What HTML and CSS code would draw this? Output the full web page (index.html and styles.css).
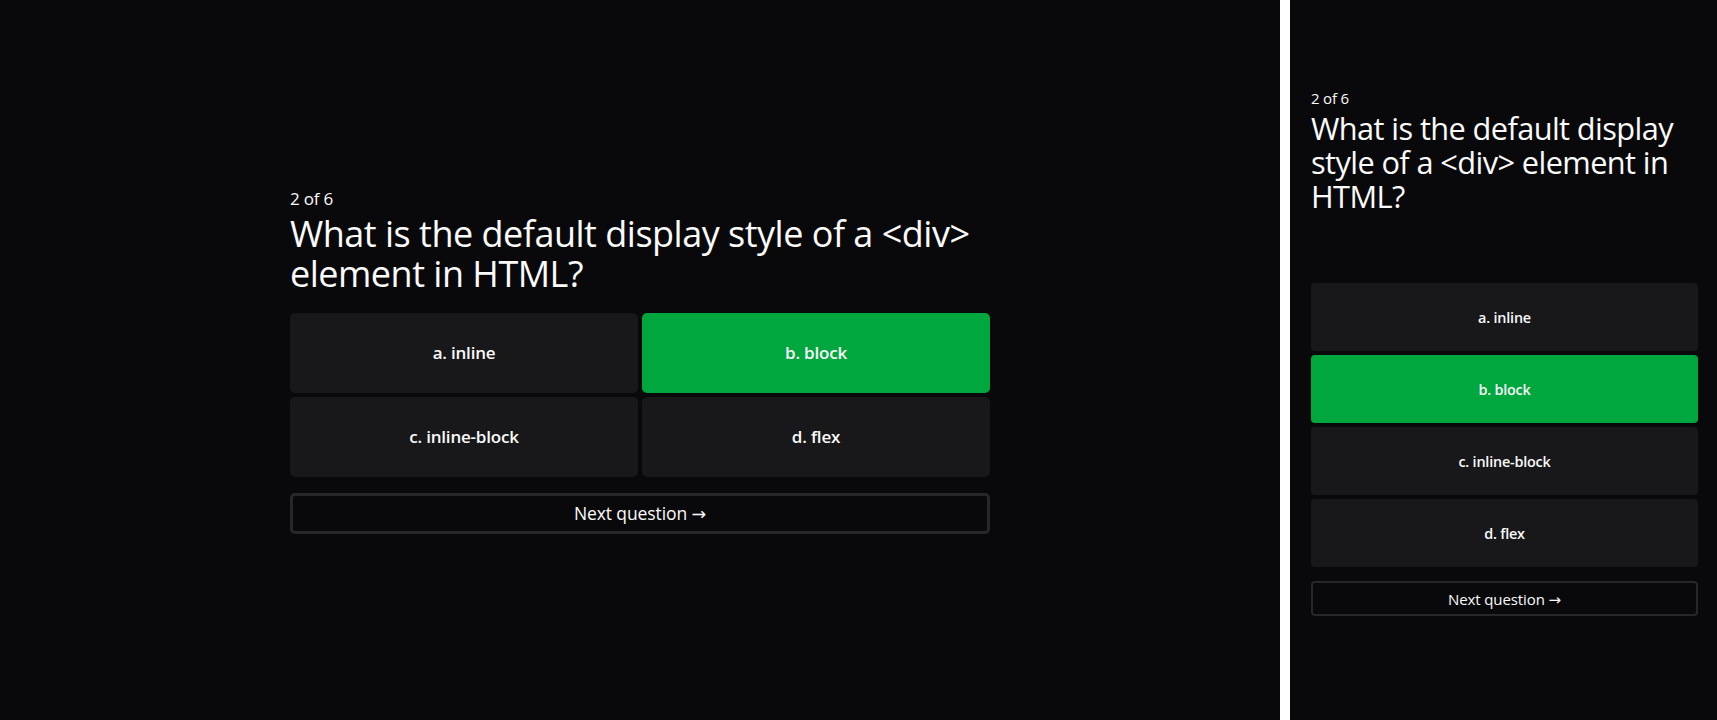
FILE: index.html
```html
<!DOCTYPE html>
<html lang="en">
<head>
<meta charset="utf-8">
<title>Quiz</title>
<link rel="stylesheet" href="styles.css">
</head>
<body>
<div class="stage">
  <section class="pane pane-wide">
    <div class="quiz">
      <p class="counter">2 of 6</p>
      <h1 class="question">What is the default display style of a &lt;div&gt; element in HTML?</h1>
      <div class="options">
        <button class="option">a. inline</button>
        <button class="option option-correct">b. block</button>
        <button class="option">c. inline-block</button>
        <button class="option">d. flex</button>
      </div>
      <button class="next">Next question →</button>
    </div>
  </section>
  <div class="divider"></div>
  <section class="pane pane-narrow">
    <div class="quiz quiz-narrow">
      <p class="counter">2 of 6</p>
      <h1 class="question">What is the default display style of a &lt;div&gt; element in HTML?</h1>
      <div class="options">
        <button class="option">a. inline</button>
        <button class="option option-correct">b. block</button>
        <button class="option">c. inline-block</button>
        <button class="option">d. flex</button>
      </div>
      <button class="next">Next question →</button>
    </div>
  </section>
</div>
</body>
</html>
```
FILE: styles.css
```css
* { box-sizing: border-box; }

html, body {
  margin: 0;
  padding: 0;
  height: 100%;
}

body {
  background: #ffffff;
  font-family: "Open Sans", "Noto Sans", "DejaVu Sans", sans-serif;
  color: #fafafa;
  overflow: hidden;
}

.stage {
  display: flex;
  width: 1717px;
  height: 720px;
}

.pane {
  background: #09090b;
  height: 720px;
}

.pane-wide {
  width: 1280px;
  display: flex;
  align-items: center;
  justify-content: center;
}

.divider {
  width: 10px;
  background: #ffffff;
}

.pane-narrow {
  width: 427px;
  padding: 88px 19px 0 21px;
}

.quiz {
  width: 700px;
  display: flex;
  flex-direction: column;
}

.counter {
  margin: 0;
  font-size: 17px;
  line-height: 24px;
  letter-spacing: -0.2px;
}

.question {
  margin: 3px 0 19px;
  font-size: 36px;
  line-height: 40px;
  font-weight: 400;
  letter-spacing: -0.5px;
}

.options {
  display: grid;
  grid-template-columns: 1fr 1fr;
  gap: 4px;
}

.option {
  height: 80px;
  border: 0;
  border-radius: 5px;
  background: #18181b;
  color: #fafafa;
  font-family: inherit;
  font-size: 17px;
  font-weight: 600;
  letter-spacing: -0.2px;
  cursor: pointer;
}

.option-correct {
  background: #00a63e;
}

.next {
  margin-top: 16px;
  height: 41px;
  border: 3px solid #27272a;
  border-radius: 5px;
  background: #09090b;
  color: #fafafa;
  font-family: inherit;
  font-size: 17.5px;
  letter-spacing: -0.1px;
  cursor: pointer;
}

.quiz-narrow {
  width: 100%;
}

.quiz-narrow .counter {
  font-size: 15px;
  line-height: 20.5px;
}

.quiz-narrow .question {
  margin: 2px 0 70px;
  font-size: 30.75px;
  line-height: 34.2px;
  letter-spacing: -0.6px;
}

.quiz-narrow .options {
  grid-template-columns: 1fr;
}

.quiz-narrow .option {
  height: 68px;
  border-radius: 4px;
  font-size: 14.4px;
}

.quiz-narrow .next {
  margin-top: 14px;
  height: 35px;
  border-width: 2.5px;
  border-radius: 4px;
  font-size: 15px;
}
```
